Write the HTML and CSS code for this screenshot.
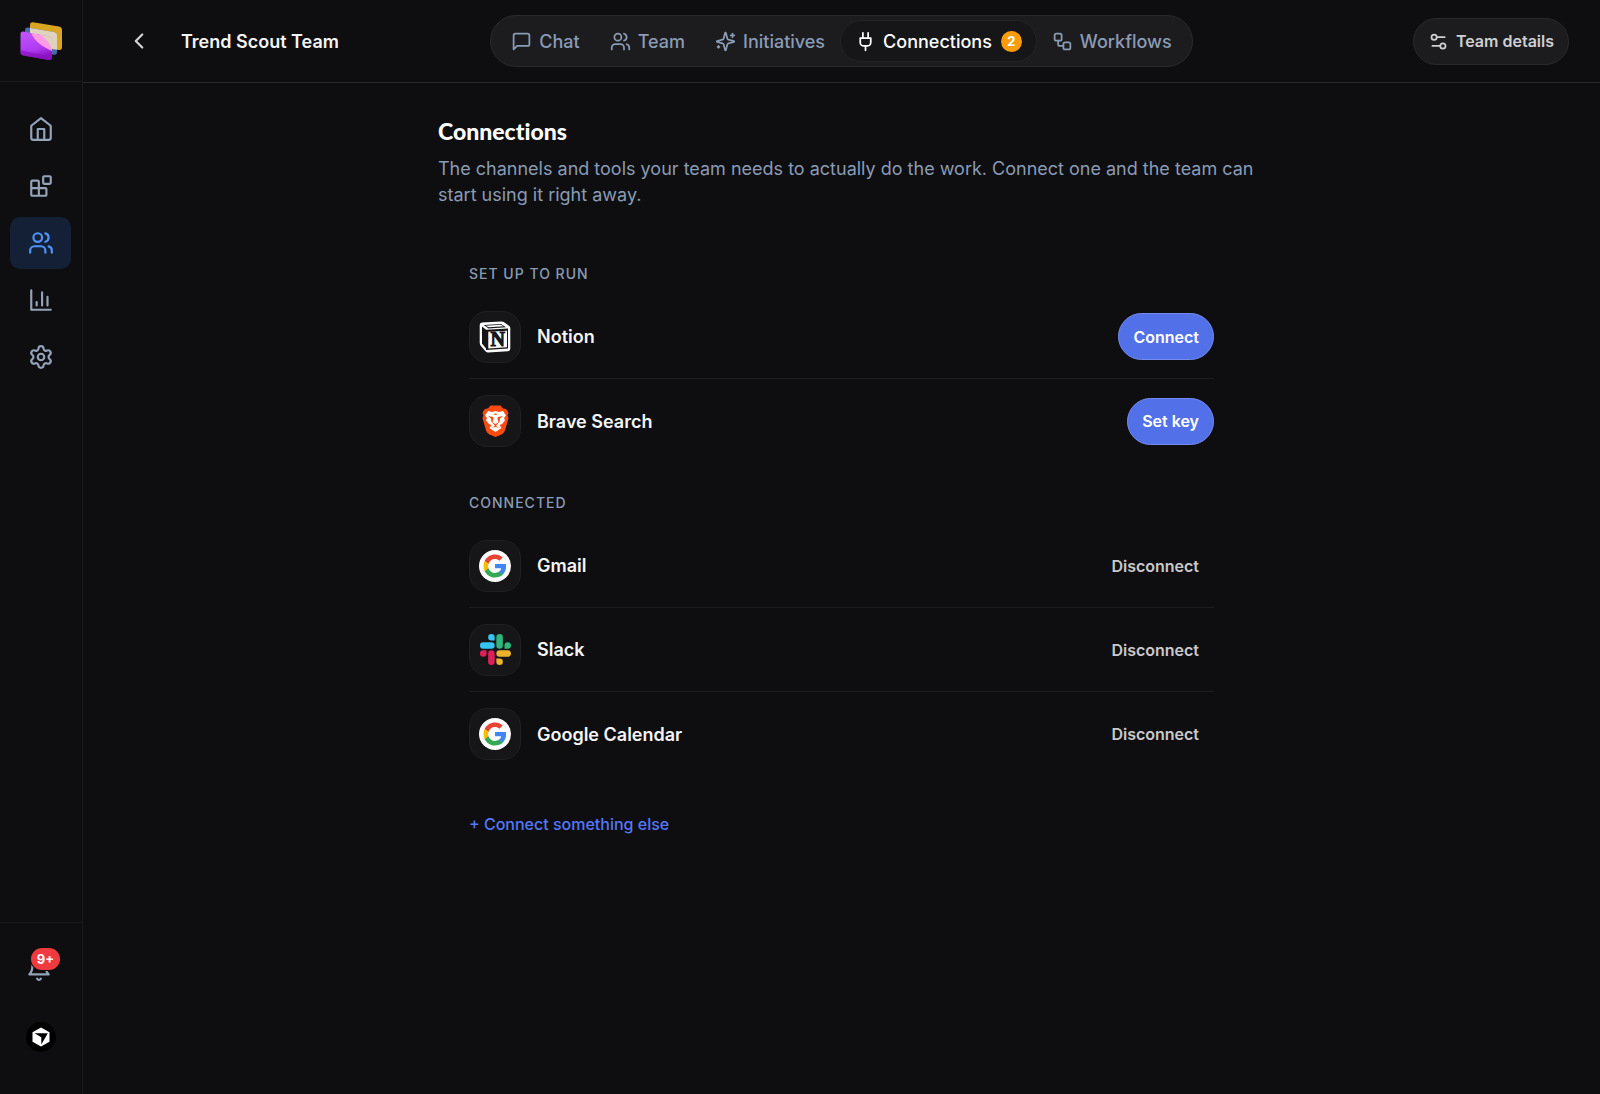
FILE: index.html
```html
<!DOCTYPE html>
<html lang="en">
<head>
    <meta charset="UTF-8">
    <meta name="viewport" content="width=device-width, initial-scale=1.0">
    <title>Trend Scout Team - Connections</title>
    <link rel="stylesheet" href="styles.css">
</head>
<body>
    <aside class="sidebar">
        <a href="#" class="logo" aria-label="Home">
            <svg width="42" height="38" viewBox="0 0 42 38">
                <defs>
                    <linearGradient id="magenta" x1="0" y1="0" x2="0.3" y2="1">
                        <stop offset="0" stop-color="#c257ff"/>
                        <stop offset="0.7" stop-color="#b03af0"/>
                        <stop offset="1" stop-color="#8d12c4"/>
                    </linearGradient>
                    <clipPath id="front"><path d="M3 9.500 29 14.500Q32 15 32 18V35Q32 38.500 28.500 38L3.500 33.500Q0.500 33 0.500 30V12Q0.500 9 3 9.500Z"/></clipPath>
                </defs>
                <path d="M13 0.200 39 4.500Q42 5 42 8V25Q42 28.500 39 28L13 24Q10 23.500 10 21V3Q10 0 13 0.200Z" fill="#dba61f"/>
                <path d="M8 5.500 34 10Q37 10.500 37 13V30Q37 33 34 32.700L8 28Q5 27.500 5 25V8Q5 5 8 5.500Z" fill="#4a6ba8"/>
                <path d="M10 5.900 34 10Q37 10.500 37 13V27.700L10 23.500Z" fill="#dfd3bd"/>
                <path d="M3 9.500 29 14.500Q32 15 32 18V35Q32 38.500 28.500 38L3.500 33.500Q0.500 33 0.500 30V12Q0.500 9 3 9.500Z" fill="url(#magenta)"/>
                <g clip-path="url(#front)">
                    <path d="M11 10Q14 21 32 29V10Z" fill="#ff9be6"/>
                    <path d="M15 10Q28 15 33 29V10Z" fill="#dfd3bd"/>
                    <path d="M0 28 32 35V39L0 34Z" fill="#8a14bd" opacity="0.700"/>
                </g>
            </svg>
        </a>
        <nav class="side-nav" aria-label="Main">
            <a href="#" class="side-link" aria-label="Home">
                <svg class="icon" viewBox="0 0 24 24"><path d="m3 9 9-7 9 7v11a2 2 0 0 1-2 2H5a2 2 0 0 1-2-2z"/><path d="M9 22V12h6v10"/></svg>
            </a>
            <a href="#" class="side-link" aria-label="Apps">
                <svg class="icon" viewBox="0 0 24 24"><rect width="7" height="7" x="14" y="3" rx="1"/><path d="M10 21V8a1 1 0 0 0-1-1H4a1 1 0 0 0-1 1v12a1 1 0 0 0 1 1h12a1 1 0 0 0 1-1v-5a1 1 0 0 0-1-1H3"/></svg>
            </a>
            <a href="#" class="side-link active" aria-label="Teams">
                <svg class="icon" viewBox="0 0 24 24"><path d="M16 21v-2a4 4 0 0 0-4-4H6a4 4 0 0 0-4 4v2"/><circle cx="9" cy="7" r="4"/><path d="M22 21v-2a4 4 0 0 0-3-3.870"/><path d="M16 3.130a4 4 0 0 1 0 7.750"/></svg>
            </a>
            <a href="#" class="side-link" aria-label="Analytics">
                <svg class="icon" viewBox="0 0 24 24"><path d="M3 3v18h18"/><path d="M18 17V9"/><path d="M13 17V5"/><path d="M8 17v-3"/></svg>
            </a>
            <a href="#" class="side-link" aria-label="Settings">
                <svg class="icon" viewBox="0 0 24 24"><path d="M9.671 4.136a2.340 2.340 0 0 1 4.659 0 2.340 2.340 0 0 0 3.319 1.915 2.340 2.340 0 0 1 2.330 4.033 2.340 2.340 0 0 0 0 3.831 2.340 2.340 0 0 1-2.330 4.033 2.340 2.340 0 0 0-3.319 1.915 2.340 2.340 0 0 1-4.659 0 2.340 2.340 0 0 0-3.320-1.915 2.340 2.340 0 0 1-2.330-4.033 2.340 2.340 0 0 0 0-3.831A2.340 2.340 0 0 1 6.350 6.051a2.340 2.340 0 0 0 3.319-1.915"/><circle cx="12" cy="12" r="3"/></svg>
            </a>
        </nav>
        <div class="side-footer">
            <button class="bell" type="button" aria-label="Notifications">
                <svg class="icon" viewBox="0 0 24 24"><path d="M18 8A6 6 0 0 0 6 8c0 7-3 9-3 9h18s-3-2-3-9"/><path d="M13.730 21a2 2 0 0 1-3.460 0"/></svg>
                <span class="bell-count">9+</span>
            </button>
            <button class="avatar" type="button" aria-label="Account">
                <svg width="18" height="20" viewBox="0 0 18 20"><path d="M9 0.500 17.500 5.300V14.700L9 19.500 0.500 14.700V5.300Z" fill="#fff"/><path d="M2.500 6.200H15.800L9.300 17.600V10.200Z" fill="#000"/></svg>
            </button>
        </div>
    </aside>

    <div class="page">
        <header class="topbar">
            <div class="topbar-left">
                <a href="#" class="back" aria-label="Back">
                    <svg class="icon" viewBox="0 0 24 24"><path d="m15 18-6-6 6-6"/></svg>
                </a>
                <span class="team-name">Trend Scout Team</span>
            </div>
            <nav class="tabs" aria-label="Team">
                <a href="#" class="tab">
                    <svg class="icon" viewBox="0 0 24 24"><path d="M21 15a2 2 0 0 1-2 2H7l-4 4V5a2 2 0 0 1 2-2h14a2 2 0 0 1 2 2z"/></svg>
                    Chat
                </a>
                <a href="#" class="tab">
                    <svg class="icon" viewBox="0 0 24 24"><path d="M16 21v-2a4 4 0 0 0-4-4H6a4 4 0 0 0-4 4v2"/><circle cx="9" cy="7" r="4"/><path d="M22 21v-2a4 4 0 0 0-3-3.870"/><path d="M16 3.130a4 4 0 0 1 0 7.750"/></svg>
                    Team
                </a>
                <a href="#" class="tab">
                    <svg class="icon" viewBox="0 0 24 24"><path d="M9.937 15.500A2 2 0 0 0 8.500 14.063l-6.135-1.582a.5.5 0 0 1 0-.962L8.500 9.936A2 2 0 0 0 9.937 8.500l1.582-6.135a.5.5 0 0 1 .963 0L14.063 8.500A2 2 0 0 0 15.500 9.937l6.135 1.581a.5.5 0 0 1 0 .964L15.500 14.063a2 2 0 0 0-1.437 1.437l-1.582 6.135a.5.5 0 0 1-.963 0z"/><path d="M20 3v4"/><path d="M22 5h-4"/><path d="M4 17v2"/><path d="M5 18H3"/></svg>
                    Initiatives
                </a>
                <a href="#" class="tab active" aria-current="page">
                    <svg class="icon" viewBox="0 0 24 24"><path d="M12 22v-5"/><path d="M9 8V2"/><path d="M15 8V2"/><path d="M18 8v5a4 4 0 0 1-4 4h-4a4 4 0 0 1-4-4V8Z"/></svg>
                    Connections
                    <span class="tab-count">2</span>
                </a>
                <a href="#" class="tab">
                    <svg class="icon" viewBox="0 0 24 24"><rect width="8" height="8" x="3" y="3" rx="2"/><path d="M7 11v4a2 2 0 0 0 2 2h4"/><rect width="8" height="8" x="13" y="13" rx="2"/></svg>
                    Workflows
                </a>
            </nav>
            <div class="topbar-right">
                <button class="btn btn-dark" type="button">
                    <svg class="icon" viewBox="0 0 24 24"><path d="M14 17H5"/><path d="M19 7h-9" /><circle cx="17" cy="17" r="3"/><circle cx="7" cy="7" r="3"/></svg>
                    Team details
                </button>
            </div>
        </header>

        <main class="content">
            <h1>Connections</h1>
            <p class="intro">The channels and tools your team needs to actually do the work. Connect one and the team can start using it right away.</p>

            <section class="group">
                <h2>Set up to run</h2>
                <ul>
                    <li class="row">
                        <span class="row-icon">
                            <svg width="32" height="32" viewBox="0 0 32 32">
                                <path d="M3 1.500 22 0.500Q24 0.400 25.500 1.400L30 4.700Q31.300 5.600 31.300 7V27.700Q31.300 30 29 30.200L9 31.400Q7.300 31.500 6.200 30.100L1.700 24.700Q0.700 23.400 0.700 21.800V4Q0.700 1.700 3 1.500Z" fill="#fff"/>
                                <path d="M4.800 4 22 3.100 27 6.300 9.500 7.400Z" fill="#161618"/>
                                <path d="M6.500 4.700 21.500 3.800 24.800 5.300 9.800 6.300Z" fill="#fff"/>
                                <path d="M3 5.500 7 8.800V27.500L3 22.500Z" fill="#161618"/>
                                <path d="M7 8.800 29 7.500V27.500L7 29Z" fill="#161618"/>
                                <path d="M9.300 10.800 28 9.700V26.300L9.300 27.500Z" fill="#fff"/>
                                <text x="18.700" y="25.300" class="notion-mark">N</text>
                            </svg>
                        </span>
                        <span class="row-name">Notion</span>
                        <button class="btn btn-primary" type="button">Connect</button>
                    </li>
                    <li class="row">
                        <span class="row-icon">
                            <svg width="27" height="32" viewBox="0 0 54 64">
                                <path d="M17 1H37L42 7Q47 6 50 10L53 16 51 21 53 26 46 51Q44 56 39 59L27 64 15 59Q10 56 8 51L1 26 3 21 1 16 4 10Q7 6 12 7Z" fill="#fb4a0f"/>
                                <path d="M12 12 20 14 27 12 34 14 42 12 48 21 44 26 46 31 40 38 35 40 39 46 27 54 15 46 19 40 14 38 8 31 10 26 6 21Z" fill="#fff"/>
                                <path d="M12 22 22 24 23 27 21 35 27 38 33 35 31 27 32 24 42 22 36 27 35 34 29 40V43L37 46 27 44 17 46 25 43V40L19 34 18 27Z" fill="#fb4a0f"/>
                                <path d="M22 18 27 17 32 18 27 20Z" fill="#fb4a0f"/>
                            </svg>
                        </span>
                        <span class="row-name">Brave Search</span>
                        <button class="btn btn-primary" type="button">Set key</button>
                    </li>
                </ul>
            </section>

            <section class="group">
                <h2>Connected</h2>
                <ul>
                    <li class="row">
                        <span class="row-icon">
                            <svg width="32" height="32" viewBox="0 0 32 32">
                                <circle cx="16" cy="16" r="16" fill="#fff"/>
                                <g id="google" transform="translate(3.400 3.400) scale(1.050)">
                                    <path d="M22.560 12.250c0-.78-.07-1.530-.2-2.250H12v4.260h5.920c-.26 1.370-1.040 2.530-2.210 3.310v2.770h3.570c2.080-1.920 3.280-4.740 3.280-8.090z" fill="#4285f4"/>
                                    <path d="M12 23c2.970 0 5.460-.98 7.280-2.660l-3.570-2.770c-.98.66-2.230 1.060-3.710 1.060-2.860 0-5.290-1.930-6.160-4.530H2.180v2.840C3.990 20.530 7.700 23 12 23z" fill="#34a853"/>
                                    <path d="M5.840 14.090c-.22-.66-.35-1.360-.35-2.090s.13-1.430.35-2.090V7.070H2.180C1.430 8.550 1 10.220 1 12s.43 3.450 1.180 4.930l3.660-2.840z" fill="#fbbc05"/>
                                    <path d="M12 5.380c1.620 0 3.060.56 4.210 1.640l3.150-3.150C17.450 2.090 14.970 1 12 1 7.700 1 3.990 3.470 2.180 7.070l3.660 2.840c.87-2.600 3.300-4.530 6.160-4.530z" fill="#ea4335"/>
                                </g>
                            </svg>
                        </span>
                        <span class="row-name">Gmail</span>
                        <button class="btn btn-ghost" type="button">Disconnect</button>
                    </li>
                    <li class="row">
                        <span class="row-icon">
                            <svg width="31" height="31" viewBox="0 0 24 24">
                                <path d="M5.042 15.165a2.528 2.528 0 0 1-2.520 2.523A2.528 2.528 0 0 1 0 15.165a2.527 2.527 0 0 1 2.522-2.520h2.520v2.520zM6.313 15.165a2.527 2.527 0 0 1 2.521-2.520 2.527 2.527 0 0 1 2.521 2.520v6.313A2.528 2.528 0 0 1 8.834 24a2.528 2.528 0 0 1-2.521-2.522v-6.313z" fill="#e01e5a"/>
                                <path d="M8.834 5.042a2.528 2.528 0 0 1-2.521-2.520A2.528 2.528 0 0 1 8.834 0a2.528 2.528 0 0 1 2.521 2.522v2.520H8.834zM8.834 6.313a2.528 2.528 0 0 1 2.521 2.521 2.528 2.528 0 0 1-2.521 2.521H2.522A2.528 2.528 0 0 1 0 8.834a2.528 2.528 0 0 1 2.522-2.521h6.312z" fill="#36c5f0"/>
                                <path d="M18.956 8.834a2.528 2.528 0 0 1 2.522-2.521A2.528 2.528 0 0 1 24 8.834a2.528 2.528 0 0 1-2.522 2.521h-2.522V8.834zM17.688 8.834a2.528 2.528 0 0 1-2.523 2.521 2.527 2.527 0 0 1-2.520-2.521V2.522A2.527 2.527 0 0 1 15.165 0a2.528 2.528 0 0 1 2.523 2.522v6.312z" fill="#2eb67d"/>
                                <path d="M15.165 18.956a2.528 2.528 0 0 1 2.523 2.522A2.528 2.528 0 0 1 15.165 24a2.527 2.527 0 0 1-2.520-2.522v-2.522h2.520zM15.165 17.688a2.527 2.527 0 0 1-2.520-2.523 2.526 2.526 0 0 1 2.520-2.520h6.313A2.527 2.527 0 0 1 24 15.165a2.528 2.528 0 0 1-2.522 2.523h-6.313z" fill="#ecb22e"/>
                            </svg>
                        </span>
                        <span class="row-name">Slack</span>
                        <button class="btn btn-ghost" type="button">Disconnect</button>
                    </li>
                    <li class="row">
                        <span class="row-icon">
                            <svg width="32" height="32" viewBox="0 0 32 32">
                                <circle cx="16" cy="16" r="16" fill="#fff"/>
                                <use href="#google"/>
                            </svg>
                        </span>
                        <span class="row-name">Google Calendar</span>
                        <button class="btn btn-ghost" type="button">Disconnect</button>
                    </li>
                </ul>
            </section>

            <a href="#" class="more">+ Connect something else</a>
        </main>
    </div>
</body>
</html>
```
FILE: styles.css
```css
* {
    box-sizing: border-box;
}
body {
    margin: 0;
    display: flex;
    min-height: 100vh;
    background: #0e0e10;
    color: #f4f4f5;
    font-family: 'Inter', sans-serif;
    font-size: 18px;
}
a {
    color: inherit;
    text-decoration: none;
}
button {
    font: inherit;
    color: inherit;
    background: none;
    border: 0;
    padding: 0;
    cursor: pointer;
}
ul {
    list-style: none;
    margin: 0;
    padding: 0;
}
svg {
    display: block;
    flex-shrink: 0;
}
.icon {
    width: 26px;
    height: 26px;
    fill: none;
    stroke: currentColor;
    stroke-width: 2;
    stroke-linecap: round;
    stroke-linejoin: round;
}

/* sidebar */
.sidebar {
    width: 83px;
    flex-shrink: 0;
    display: flex;
    flex-direction: column;
    border-right: 1px solid #1a1a1d;
    color: #94a3b8;
}
.logo {
    display: flex;
    align-items: center;
    justify-content: center;
    height: 82px;
    border-bottom: 1px solid #1a1a1d;
}
.side-nav {
    flex: 1;
    display: flex;
    flex-direction: column;
    gap: 5px;
    padding: 21px 11px 21px 10px;
}
.side-link {
    display: flex;
    align-items: center;
    justify-content: center;
    height: 52px;
    border-radius: 10px;
}
.side-link.active {
    background: #142035;
    color: #4f94fa;
}
.side-footer {
    display: flex;
    flex-direction: column;
    align-items: center;
    gap: 26px;
    padding: 21px 10px 42px;
    border-top: 1px solid #1a1a1d;
}
.bell {
    position: relative;
    display: flex;
    justify-content: center;
    align-items: center;
    width: 52px;
    height: 52px;
    padding: 0 4px 2px 0;
}
.bell-count {
    position: absolute;
    top: 4px;
    right: 7px;
    height: 22px;
    padding: 0 6px;
    border-radius: 11px;
    background: #ef3b3f;
    box-shadow: 0 0 0 1px #0e0e10;
    color: #fff;
    font-size: 13px;
    font-weight: 700;
    line-height: 22px;
}
.avatar {
    display: flex;
    align-items: center;
    justify-content: center;
    width: 30px;
    height: 30px;
    border-radius: 50%;
    background: #000;
}

/* top bar */
.page {
    flex: 1;
    min-width: 0;
}
.topbar {
    display: grid;
    grid-template-columns: 1fr auto 1fr;
    align-items: center;
    height: 83px;
    padding: 0 31px;
    border-bottom: 1px solid #29292c;
}
.topbar-left {
    display: flex;
    align-items: center;
    gap: 29px;
    padding-left: 12px;
}
.back {
    color: #d4d4d8;
}
.team-name {
    font-weight: 600;
}
.tabs {
    display: flex;
    padding: 4px 5px;
    border: 1px solid #2a2a2d;
    border-radius: 26px;
    background: #1c1c1f;
}
.tab {
    display: flex;
    align-items: center;
    gap: 7px;
    height: 42px;
    padding: 0 14px;
    border: 1px solid transparent;
    border-radius: 21px;
    color: #8a9bb5;
    font-weight: 500;
}
.tab .icon {
    width: 21px;
    height: 21px;
}
.tab.active {
    background: #161618;
    border-color: #242427;
    color: #fff;
}
.tab-count {
    width: 21px;
    height: 21px;
    margin-left: 2px;
    border-radius: 50%;
    background: #fb9d0b;
    color: #fff;
    font-size: 13px;
    font-weight: 700;
    line-height: 21px;
    text-align: center;
}
.topbar-right {
    display: flex;
    justify-content: flex-end;
}
.btn {
    display: flex;
    align-items: center;
    gap: 7px;
    height: 47px;
    padding: 0 14px;
    border: 1px solid transparent;
    border-radius: 24px;
    font-size: 16px;
    font-weight: 600;
}
.btn .icon {
    width: 21px;
    height: 21px;
}
.btn-dark {
    background: #1c1c1f;
    border-color: #2a2a2d;
    color: #cfcfd2;
}
.btn-primary {
    background: #5271e9;
    border-color: #748cf0;
    color: #fff;
}
.btn-ghost {
    color: #c9c9cc;
}

/* connections */
.content {
    max-width: 807px;
    margin: 0 auto;
    padding: 34px 0;
}
h1 {
    margin: 0 0 11px;
    font-family: 'Lato', sans-serif;
    font-size: 23px;
    font-weight: 900;
    font-variant-ligatures: none;
    line-height: 28px;
    color: #fff;
}
.intro {
    margin: 0 -20px 56px 0;
    color: #8a9bb5;
    line-height: 26px;
}
.group {
    padding: 0 31px;
    margin-bottom: 30px;
}
h2 {
    margin: 0 0 11px;
    color: #8a9bb5;
    font-size: 14px;
    font-weight: 500;
    line-height: 20px;
    letter-spacing: 1px;
    text-transform: uppercase;
}
.row {
    display: flex;
    align-items: center;
    gap: 16px;
    height: 84px;
    border-bottom: 1px solid #1e1e21;
}
.row:last-child {
    border-bottom: 0;
}
.row-icon {
    display: flex;
    align-items: center;
    justify-content: center;
    width: 52px;
    height: 52px;
    border: 1px solid #202023;
    border-radius: 18px;
    background: #161618;
}
.row-name {
    flex: 1;
    font-weight: 600;
}
.notion-mark {
    fill: #161618;
    stroke: #161618;
    stroke-width: 1px;
    font-family: 'Liberation Serif', serif;
    font-size: 20px;
    font-weight: 700;
    text-anchor: middle;
}
.more {
    display: inline-block;
    margin: 6px 31px 0;
    color: #5577f8;
    font-size: 16px;
    font-weight: 500;
    line-height: 24px;
}
```
